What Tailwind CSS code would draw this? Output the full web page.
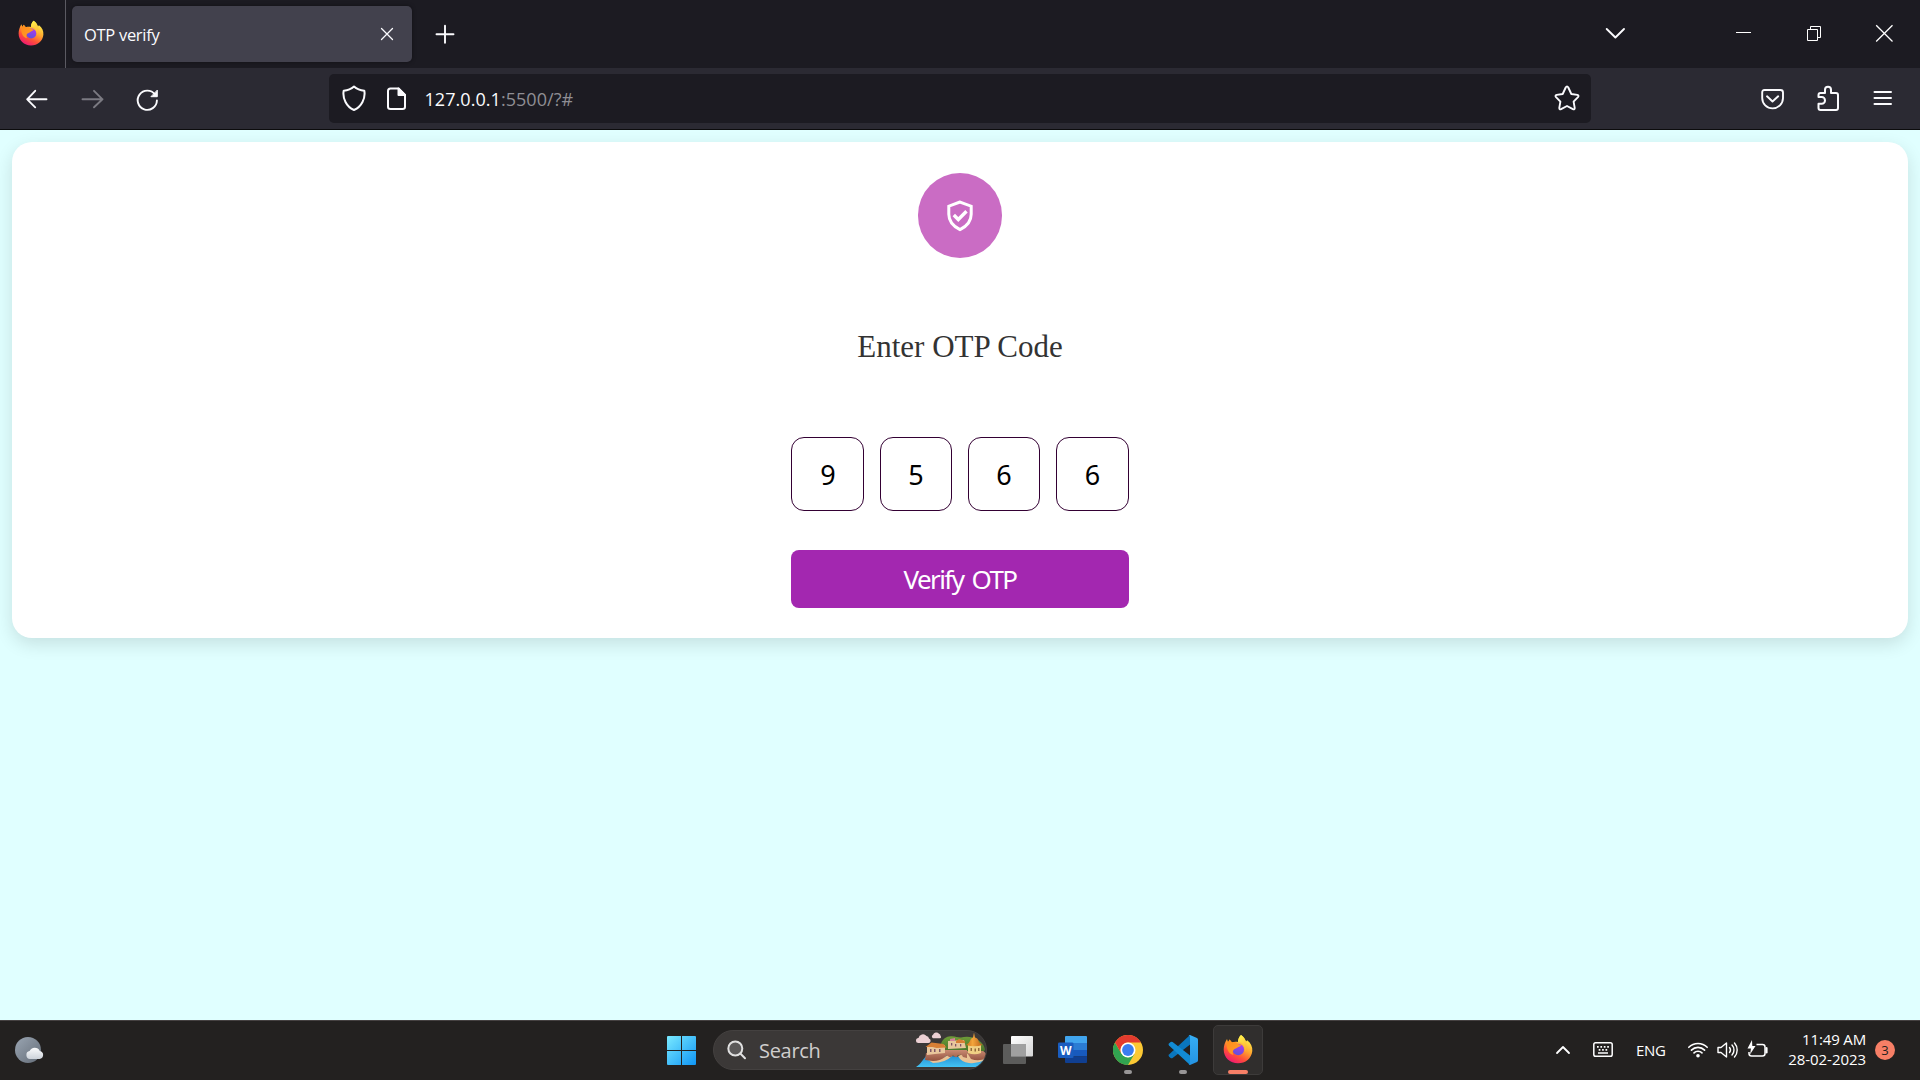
<!DOCTYPE html>
<html lang="en">
<head>
<meta charset="utf-8">
<title>OTP verify</title>
<script src="https://cdn.jsdelivr.net/npm/@tailwindcss/browser@4"></script>
</head>
<body class="flex h-[1080px] w-[1920px] flex-col overflow-hidden bg-[#e0ffff] font-['Open_Sans','Noto_Sans',sans-serif]">

<svg class="absolute h-0 w-0" aria-hidden="true">
  <defs>
    <linearGradient id="ffBody" x1=".8" y1=".1" x2=".3" y2="1"><stop offset="0" stop-color="#fff04a"/><stop offset=".4" stop-color="#ffa52e"/><stop offset=".7" stop-color="#ff5038"/><stop offset="1" stop-color="#ee1675"/></linearGradient>
    <linearGradient id="ffCore" x1=".7" y1="0" x2=".3" y2="1"><stop offset="0" stop-color="#b038f0"/><stop offset="1" stop-color="#5a54d8"/></linearGradient>
    <linearGradient id="ffEar" x1="0" y1="0" x2="1" y2="1"><stop offset="0" stop-color="#ff8a1a"/><stop offset="1" stop-color="#ffa02a"/></linearGradient>
    <linearGradient id="ffFlame" x1=".3" y1="0" x2=".6" y2="1"><stop offset="0" stop-color="#fff24c"/><stop offset="1" stop-color="#ffb031"/></linearGradient>
    <symbol id="firefox" viewBox="0 0 30 30">
      <path fill="url(#ffBody)" d="M18 1c3 2 4.500 4.500 5 6.500l1.200-1.300C28 9 29.600 13 29.300 17 28.500 24.500 22.500 29.300 15 29.300 7 29.300.700 23.500.700 15.500.700 12 2 8 4 5l1 3.200L6.600 5.500 9 8.500C11.500 7.400 14 8 15 8 15 5 16 3 18 1z"/>
      <circle cx="15.300" cy="15.500" r="5.800" fill="url(#ffCore)"/>
      <path fill="url(#ffEar)" d="M4.500 6.500 5 8.200 6.600 5.500 9 8.500c2-.8 4.200-.3 5.500 1 1 1 2.400 1.300 3.700 1.300-.2 1.800-2.700 2-3.700 2.700-.8 1-2.500 1-4 2.500-1.200 1.400-1 3.500 0 5C5 20 2.500 13 4.500 6.500z"/>
      <path fill="url(#ffFlame)" d="M18 1c3 2 4.500 5 5 8 .8 3 .5 6-1 9 .3-5-1.500-8-3.500-9.500L15 8C15 5 16 3 18 1z"/>
    </symbol>
    <linearGradient id="win" x1="0" y1="0" x2="1" y2="1"><stop offset="0" stop-color="#7aeaff"/><stop offset="1" stop-color="#0f95f5"/></linearGradient>
    <linearGradient id="tvFront" x1="0" y1="0" x2="1" y2="1"><stop offset="0" stop-color="#fff"/><stop offset="1" stop-color="#d5d5d5"/></linearGradient>
    <linearGradient id="moon" x1="0" y1="0" x2="1" y2="1"><stop offset="0" stop-color="#9aa5b2"/><stop offset="1" stop-color="#646d78"/></linearGradient>
    <linearGradient id="cloud" x1="0" y1="0" x2="0" y2="1"><stop offset="0" stop-color="#fafbfc"/><stop offset="1" stop-color="#cdd3da"/></linearGradient>
    <linearGradient id="sea" x1="0" y1="0" x2="0" y2="1"><stop offset="0" stop-color="#2389cf"/><stop offset="1" stop-color="#43c4f4"/></linearGradient>
    <linearGradient id="hill" x1="0" y1="0" x2="0" y2="1"><stop offset="0" stop-color="#6f9c38"/><stop offset="1" stop-color="#3c6b28"/></linearGradient>
    <linearGradient id="rock" x1="0" y1="0" x2="0" y2="1"><stop offset="0" stop-color="#c98a72"/><stop offset="1" stop-color="#93523f"/></linearGradient>
    <linearGradient id="dome" x1="0" y1="0" x2="1" y2="0"><stop offset="0" stop-color="#c8691c"/><stop offset=".4" stop-color="#f3a63c"/><stop offset="1" stop-color="#b9601b"/></linearGradient>
    <linearGradient id="vsRight" x1="0" y1="0" x2="0" y2="1"><stop offset="0" stop-color="#36aef5"/><stop offset="1" stop-color="#2493e2"/></linearGradient>
  </defs>
</svg>

<!-- Tab strip -->
<header class="flex h-[68px] shrink-0 bg-[#1c1b22]">
  <div class="flex w-[66px] border-r border-[#5b5a62] pt-[20px] pl-[18px]">
    <svg class="h-[26px] w-[26px]"><use href="#firefox"/></svg>
  </div>
  <div class="mt-1.5 ml-1.5 flex h-14 w-[340px] items-center justify-between rounded-[5px] bg-[#42414d] pr-[18px] pl-3 shadow-[0_0_4px_rgba(0,0,0,.4)]">
    <span class="pt-0.5 text-[16.500px] tracking-[-0.300px] text-[#fbfbfe]">OTP verify</span>
    <svg class="h-[14px] w-[14px]" viewBox="0 0 14 14" fill="none" stroke="#fbfbfe" stroke-width="1.300" stroke-linecap="round"><path d="M1.500 1.500l11 11M12.500 1.500l-11 11"/></svg>
  </div>
  <svg class="mt-6 ml-[23px] h-5 w-5" viewBox="0 0 20 20" fill="none" stroke="#fbfbfe" stroke-width="1.900" stroke-linecap="round"><path d="M10 1.700v17M1.500 10.300h17"/></svg>
  <div class="ml-auto flex pt-6">
    <svg class="h-5 w-[22px]" viewBox="0 0 22 20" fill="none" stroke="#fbfbfe" stroke-width="1.900" stroke-linecap="round" stroke-linejoin="round"><path d="M1.700 5l8.700 8.500L19 5"/></svg>
    <svg class="ml-[109px] h-5 w-[17px]" viewBox="0 0 17 20"><path fill="#fff" d="M0 8h15v1H0z"/></svg>
    <svg class="ml-[54px] h-5 w-4" viewBox="0 0 16 20" fill="none" stroke="#fff"><path d="M.5 5.500h10v11H.5zM3.500 5.500v-3h10v11h-3"/></svg>
    <svg class="mr-[27px] ml-[52px] h-5 w-[18px]" viewBox="0 0 18 20" fill="none" stroke="#fff" stroke-width="1.300"><path d="M1.200 1.200l16.300 16.300M17.500 1.200L1.200 17.500"/></svg>
  </div>
</header>

<!-- Navigation bar -->
<nav class="flex h-[62px] shrink-0 border-b border-[#0c0c0d] bg-[#2b2a33]">
  <div class="flex w-[329px] pt-[18px] pl-[25px]">
    <svg class="h-[26px] w-6" viewBox="0 0 24 26" fill="none" stroke="#fbfbfe" stroke-width="1.900" stroke-linecap="round" stroke-linejoin="round"><path d="M21.500 13.300H2.200M10.200 4.800L2.200 13.300l8 8"/></svg>
    <svg class="ml-[31px] h-[26px] w-6" viewBox="0 0 24 26" fill="none" stroke="#7b7a82" stroke-width="1.900" stroke-linecap="round" stroke-linejoin="round"><path d="M2.500 13.300H22.500M14 4.800l8.500 8.500-8.500 8"/></svg>
    <svg class="ml-[31px] h-[26px] w-6" viewBox="0 0 24 26" fill="none" stroke="#fbfbfe" stroke-width="1.900" stroke-linecap="round"><path d="M20 8.500A9.600 9.600 0 1 0 21.900 14.500"/><path d="M22.300 4.500v6.200h-6z" fill="#fbfbfe" stroke-width="1" stroke-linejoin="round"/></svg>
  </div>
  <div class="mt-1.5 flex h-[49px] w-[1262px] items-center rounded-[5px] bg-[#1c1b22] pl-[12.500px]">
    <svg class="mb-0.5 h-[26px] w-6" viewBox="0 0 24 26" fill="none" stroke="#fbfbfe" stroke-width="2" stroke-linejoin="round"><path d="M12 1.500C9.500 3.800 5 5.500 1.700 5.800c-.6 3 .2 8 1.800 11.200 2 4 5.500 6.700 8.500 8 3-1.300 6.500-4 8.500-8 1.600-3.200 2.400-8.200 1.800-11.200C19 5.500 14.500 3.800 12 1.500z"/></svg>
    <svg class="ml-5 h-6 w-5" viewBox="0 0 20 24" fill="none" stroke="#fbfbfe" stroke-width="2" stroke-linejoin="round"><path d="M12.500 1.500h-8Q2 1.500 2 4v16q0 2 2.500 2h12q2.500 0 2.500-2V8z"/><path d="M12.500 1.500V8H19z" fill="#fbfbfe"/></svg>
    <span class="ml-[19px] pt-0.5 text-[18px] tracking-[0.050px] text-[#8f8e94]"><span class="text-[#fbfbfe]">127.0.0.1</span>:5500/?#</span>
    <svg class="mr-[11.500px] mb-px ml-auto h-[26px] w-[26px]" viewBox="0 0 26 26" fill="none" stroke="#fbfbfe" stroke-width="1.900" stroke-linejoin="round"><path d="M11.700 2.500q1.300-2.200 2.600 0l3 6.500 6 .9q2 .6.700 2.200l-4.400 4.500 1.100 6.300q0 2-1.800 1.200L13 21l-5.900 3.100q-1.800.8-1.800-1.200l1.100-6.300L2 12.100q-1.300-1.600.7-2.200L8.700 9z"/></svg>
  </div>
  <div class="flex flex-1 items-start pt-[17px] pl-[169px]">
    <svg class="h-[28px] w-[25px]" viewBox="0 0 25 28" fill="none" stroke="#fbfbfe" stroke-width="1.900" stroke-linecap="round" stroke-linejoin="round"><path d="M4.500 5h16q2.500 0 2.500 2.500V13a10.400 10.400 0 0 1-20.800 0V7.500Q2.200 5 4.500 5z"/><path d="M7 11.300l5.500 5.200 5.700-5.200"/></svg>
    <svg class="ml-[31px] h-[28px] w-[25px]" viewBox="0 0 25 28" fill="none" stroke="#fbfbfe" stroke-width="2" stroke-linejoin="round"><path d="M4.500 25q-2 0-2-2v-4.300h3.200a3.300 3.300 0 0 0 0-6.600H2.500V10q0-2 2-2H9V4.700a3 3 0 0 1 6 0V8h5q2 0 2 2v13q0 2-2 2z"/></svg>
    <svg class="ml-8 h-[28px] w-5" viewBox="0 0 20 28" fill="none" stroke="#fbfbfe" stroke-width="2" stroke-linecap="round"><path d="M1.500 7h16.500M1.500 13h16.500M1.500 19h16.500"/></svg>
  </div>
</nav>

<!-- Page -->
<main class="h-[890px] shrink-0 p-3">
  <section class="flex h-[496px] flex-col items-center rounded-[20px] bg-white pt-[31px] shadow-[0_6px_18px_rgba(0,0,0,.12)]">
    <div class="flex h-[85px] w-[84px] items-center justify-center rounded-full bg-[#ca6cc4]">
      <svg class="h-8 w-7" viewBox="0 0 28 32" fill="none" stroke="#fff" stroke-width="3"><path d="M14 2L2.800 6.200v8c0 8 5 12.300 11.200 15.400 6.200-3.100 11.200-7.400 11.200-15.400v-8z"/><path stroke-width="3.400" d="M7.800 15l4.500 4.500 8.200-8.200"/></svg>
    </div>
    <h4 class="mt-[70px] h-[39px] font-['Liberation_Serif',serif] text-[31px] leading-[38px] whitespace-nowrap text-[#333]">Enter OTP Code</h4>
    <form class="mt-[70px] flex w-[338px] flex-col">
      <div class="flex justify-between font-['Noto_Sans',sans-serif] text-[27px] leading-none text-black">
        <div class="flex h-[74px] w-[73px] items-center justify-center rounded-[13px] border border-[#330033] pt-px pl-px">9</div>
        <div class="flex h-[74px] w-[72px] items-center justify-center rounded-[13px] border border-[#330033] pt-px">5</div>
        <div class="flex h-[74px] w-[72px] items-center justify-center rounded-[13px] border border-[#330033] pt-px">6</div>
        <div class="flex h-[74px] w-[73px] items-center justify-center rounded-[13px] border border-[#330033] pt-px">6</div>
      </div>
      <button type="button" class="mt-[39px] h-[58px] rounded-lg bg-[#a327b0] font-['Noto_Sans',sans-serif] text-[26px] leading-none tracking-[-1.600px] text-white [word-spacing:3px]">Verify OTP</button>
    </form>
  </section>
</main>

<!-- Taskbar -->
<footer class="flex h-[60px] shrink-0 border-t border-[#454141] bg-[#232120]">
  <div class="w-[667px] pt-[14px] pl-[14px]">
    <svg class="h-8 w-[30px]" viewBox="0 0 30 32"><circle cx="14" cy="15" r="13" fill="url(#moon)"/><path fill="url(#cloud)" d="M16 24a4 4 0 0 1-.4-7.900 5.600 5.600 0 0 1 10.200-.2A4.100 4.100 0 0 1 25.500 24z"/></svg>
  </div>
  <svg class="mt-[15px] h-[29px] w-[29px]" viewBox="0 0 29 29" fill="url(#win)"><path d="M1 0h13v14H0V1q0-1 1-1zM15 0h13q1 0 1 1v13H15zM0 15h14v14H1q-1 0-1-1zM15 15h14v13q0 1-1 1H15z"/></svg>
  <div class="mt-[9px] ml-[17px] flex h-10 w-[274px] items-center overflow-hidden rounded-full border border-[#444140] bg-[#3b3837] pl-[13px]">
    <svg class="h-5 w-5" viewBox="0 0 20 20" fill="#5b5959" stroke="#e0e0e0" stroke-width="2"><circle cx="8.300" cy="8.500" r="7"/><path d="M13.300 13.500l4.700 4.700" stroke-linecap="round"/></svg>
    <span class="ml-3 pt-0.5 text-[20px] tracking-[-0.300px] text-[#d0cecd]">Search</span>
    <svg class="-mr-px ml-auto h-[36px] w-[72px]" viewBox="0 0 72 36">
      <path fill="#ecd0d3" d="M3.500 11a2.500 2.500 0 0 1 0-5 4.500 4.500 0 0 1 8-2 3 3 0 0 1 2.500 2.500 2.300 2.300 0 0 1-.5 4.500zM18 6.300a2 2 0 0 1 0-3.600 3.500 3.500 0 0 1 6-1 2 2 0 0 1 1.500 2 1.500 1.500 0 0 1-.5 2.600z"/>
      <path fill="url(#hill)" d="M26 13c0-4 4-8 8-8.500 6-1 9 1.500 12 1 5-1.500 12-1 16 2 4 2 7 5 8 10l-3 6H30z"/>
      <path fill="url(#sea)" d="M1 35c5-3 7-8 12-13l22 2 36 3q-3 6-9 8z"/>
      <path fill="#e9c294" d="M13 28q12 1 20-5l4 1q-7 7-19 7zM43 24l8-3 19 5v2q-8 4-16 3-8-1-11-7z"/>
      <path fill="url(#rock)" d="M11 21l20-3h21v8l-4-1q-1-3-4-2-2 0-2 2h-2q-2-3-4 0h-2q-2-3-4 0-5 4-12 4l-8-1zM51 19h17q4 2 4 7-8 4-16 1z"/>
      <path fill="#e9c69c" d="M12 15l6-3 12 1v8l-10 1-8 1zM33 9l16-1 2 8-18 1z"/>
      <path fill="#d87f35" d="M10.500 15l6-4.500 12 1.500 3 3.500-10 .5-4-1zM41 9l3-2 6 2v2h-9z"/>
      <path fill="#d3829a" d="M35 7l5-1v3h-5z"/>
      <path fill="#805666" d="M15 17h1.500v3H15zM19 17h1.500v3H19zM24 17h1.500v3H24zM36 11h1.300v2.500H36zM40 12h1.300v2.500H40zM45 12h1.300v2.500H45z"/>
      <path fill="#f0d084" d="M53 13h13v8q-6.500 2.500-13 0z"/>
      <path fill="url(#dome)" d="M51 13q3-1.500 4-4 .5-3 3-3.500L59 .5l1 5q3 .5 3.500 3.500 1 2.500 4 4-8 2.500-16.500 0z"/>
      <path fill="#926b3d" d="M55.500 16H57v3h-1.500zM59.500 16.500H61v3h-1.500zM63 16h1.500v3H63z"/>
    </svg>
  </div>
  <svg class="mt-[15px] ml-4 h-[29px] w-[30px]" viewBox="0 0 30 29"><rect x="8" width="22" height="20.500" rx="1" fill="url(#tvFront)"/><rect y="8" width="23" height="20" rx="1" fill="#666" fill-opacity=".85"/><path fill="#a0a0a0" d="M8 8h15v12.500H8z"/></svg>
  <svg class="mt-[15px] ml-[25px] h-[29px] w-[29px]" viewBox="0 0 29 29">
    <path fill="#41a5ee" d="M8 0h20q1 0 1 1v6H7V1q0-1 1-1z"/><path fill="#2b7cd3" d="M7 7h22v7H7z"/><path fill="#185abd" d="M7 14h22v6.500H7z"/><path fill="#103f91" d="M7 20.500h22V26q0 1-1 1H8q-1 0-1-1z"/>
    <rect y="6.500" width="15.500" height="15.500" rx="1.300" fill="#1a5dbf"/><text x="7.800" y="18.500" text-anchor="middle" font-family="Open Sans" font-weight="700" font-size="12" fill="#fff">W</text>
  </svg>
  <div class="ml-[26px] flex w-[30px] flex-col items-center pt-[14px]">
    <svg class="h-[30px] w-[30px]" viewBox="0 0 30 30">
      <circle cx="15" cy="15" r="15" fill="#fcc934"/>
      <path fill="#31a350" d="M2 7.500 8.500 18.700 15 22.500 21.500 18.700 15 30A15 15 0 0 1 2 7.500z"/>
      <path fill="#e33b2e" d="M2 7.500A15 15 0 0 1 28 7.500H15a7.500 7.500 0 0 0-6.500 11.200z"/>
      <circle cx="15" cy="15" r="7.500" fill="#fff"/><circle cx="15" cy="15" r="5.900" fill="#3a7df0"/>
    </svg>
    <div class="mt-[5px] h-1 w-2 rounded-full bg-[#989696]"></div>
  </div>
  <div class="ml-[25px] flex w-[30px] flex-col items-center pt-[14px]">
    <svg class="h-[30px] w-[30px]" viewBox="0 0 30 30">
      <path fill="#0a76bd" d="M22 0L1 19.500q-1 1 0 2l1.600 1.400q1 .6 2 0L24 8z"/>
      <path fill="#128bd4" d="M22 30L1 10.500q-1-1 0-2L2.600 7.100q1-.6 2 0L24 22z"/>
      <path fill="url(#vsRight)" d="M22 0l7 3q1 .6 1 1.800v20.400q0 1.200-1 1.800l-7 3q-.8 0-1.400-1 1.400.8 1.400-1V2q0-1.800-1.400-1 .6-1 1.400-1z"/>
    </svg>
    <div class="mt-[5px] h-1 w-2 rounded-full bg-[#989696]"></div>
  </div>
  <div class="mt-1 ml-[15px] flex h-[50px] w-[50px] flex-col items-center rounded-[5px] border border-[#3d3b3a] bg-[#302e2d] pt-[8px]">
    <svg class="h-[30px] w-[30px]"><use href="#firefox"/></svg>
    <div class="mt-[6px] h-1 w-5 rounded-full bg-[#f77f66]"></div>
  </div>
  <div class="ml-auto flex h-[58px] items-center text-white">
    <svg class="h-5 w-4" viewBox="0 0 16 20" fill="none" stroke="#fff" stroke-width="1.800" stroke-linecap="round" stroke-linejoin="round"><path d="M2 13l6-6 6 6"/></svg>
    <svg class="ml-[22px] h-5 w-5" viewBox="0 0 20 20" fill="none" stroke="#fff" stroke-width="1.500"><rect x=".8" y="2.700" width="18.400" height="13.500" rx="1.800"/><path stroke-width="1.700" stroke-dasharray="1.700 1.700" d="M4 6.800h13M5.700 9.800h10"/><path d="M5 13h10"/></svg>
    <span class="ml-[23px] w-[29px] pt-px text-[15px] tracking-[-0.300px] whitespace-nowrap">ENG</span>
    <svg class="ml-[22px] h-5 w-[22px]" viewBox="0 0 22 20" fill="none" stroke="#fff" stroke-width="1.600" stroke-linecap="round"><path d="M1.800 7.300a13 13 0 0 1 18.400 0M4.400 10.100a9.300 9.300 0 0 1 13.200 0M7 12.900a5.600 5.600 0 0 1 8 0"/><circle cx="11" cy="15.700" r="1.800" fill="#fff" stroke="none"/></svg>
    <svg class="ml-[8px] h-5 w-[22px]" viewBox="0 0 22 20" fill="none" stroke="#fff" stroke-width="1.400" stroke-linecap="round" stroke-linejoin="round"><path d="M1 7.500h3L9.500 3v14L4 12.500H1zM12.500 7.500a4 4 0 0 1 0 5M15 5a7.300 7.300 0 0 1 0 10M17.500 3a10.500 10.500 0 0 1 0 14"/></svg>
    <svg class="ml-[8px] h-5 w-[22px]" viewBox="0 0 22 20" fill="none" stroke="#fff" stroke-width="1.500" stroke-linejoin="round"><path d="M9.500 4.500h6q2.500 0 2.500 2.500v6.500q0 2.500-2.500 2.500h-11Q2 16 2 13.500V12"/><path d="M19.500 8v4.500" stroke-width="2.200" stroke-linecap="round"/><path fill="#fff" stroke="none" d="M5 0L.5 8.500H4l-1 6L8.500 6H5.300z"/></svg>
    <div class="flex w-[97px] flex-col items-end pb-0.5 text-[15px] leading-5 tracking-[-0.050px] whitespace-nowrap"><span class="tracking-[-0.150px]">11:49 AM</span><span>28-02-2023</span></div>
    <div class="mr-[25px] ml-[9px] flex h-5 w-5 items-center justify-center rounded-full bg-[#f77f66] text-[13px] leading-none text-[#231f1e]">3</div>
  </div>
</footer>
</body>
</html>
